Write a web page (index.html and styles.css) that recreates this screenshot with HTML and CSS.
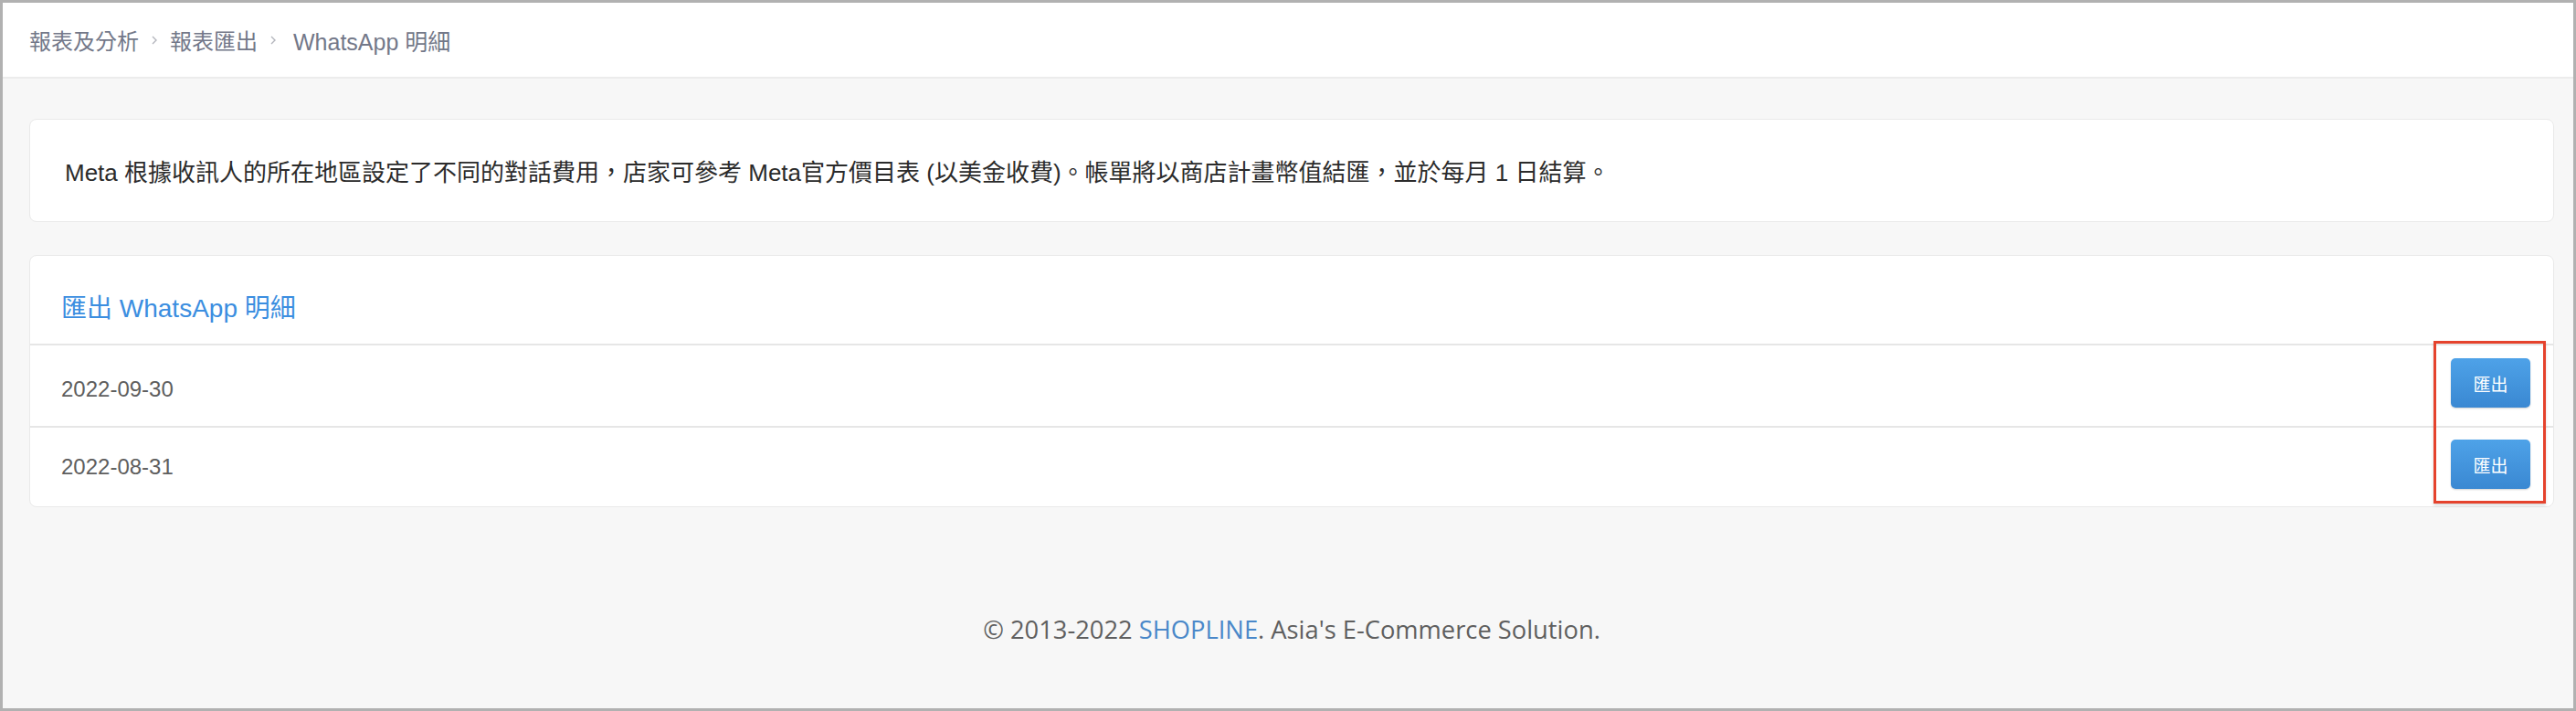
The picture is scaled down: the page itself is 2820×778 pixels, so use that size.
FILE: index.html
```html
<!DOCTYPE html>
<html lang="zh-Hant">
<head>
<meta charset="utf-8">
<title>WhatsApp 明細</title>
<link rel="stylesheet" href="styles.css">
</head>
<body>
<div class="frame">
  <header class="topbar">
    <nav class="breadcrumb">
      <span class="crumb">報表及分析</span>
      <svg class="chev" viewBox="0 0 8 12" width="8" height="12"><path d="M2 2 L6 6 L2 10" fill="none" stroke="#b4b6bd" stroke-width="1.4"/></svg>
      <span class="crumb">報表匯出</span>
      <svg class="chev" viewBox="0 0 8 12" width="8" height="12"><path d="M2 2 L6 6 L2 10" fill="none" stroke="#b4b6bd" stroke-width="1.4"/></svg>
      <span class="crumb current">WhatsApp 明細</span>
    </nav>
  </header>
  <main class="main">
    <section class="card notice">
      <p class="notice-text">Meta 根據收訊人的所在地區設定了不同的對話費用，店家可參考 Meta官方價目表 (以美金收費)。帳單將以商店計畫幣值結匯，並於每月 1 日結算。</p>
    </section>
    <section class="card export">
      <div class="export-head">匯出 WhatsApp 明細</div>
      <div class="row first">
        <span class="date">2022-09-30</span>
        <button class="btn">匯出</button>
      </div>
      <div class="row">
        <span class="date">2022-08-31</span>
        <button class="btn">匯出</button>
      </div>
      <div class="highlight"></div>
    </section>
    <footer class="footer">© 2013-2022 <span class="brand">SHOPLINE</span>. Asia's E-Commerce Solution.</footer>
  </main>
</div>
</body>
</html>
```

FILE: styles.css
```css
html, body {
  margin: 0;
  padding: 0;
}
body {
  background: #b1b1b1;
  font-family: "Liberation Sans", "Noto Sans CJK TC", sans-serif;
}
.frame {
  width: 2820px;
  height: 778px;
  box-sizing: border-box;
  border: 3px solid #b1b1b1;
  background: #f7f7f7;
  display: flex;
  flex-direction: column;
  overflow: hidden;
}
.topbar {
  height: 81px;
  flex: 0 0 81px;
  background: #ffffff;
  border-bottom: 2px solid #ececec;
  display: flex;
  align-items: center;
  padding-left: 29px;
}
.breadcrumb {
  display: flex;
  align-items: center;
  gap: 13px;
  font-size: 24px;
  color: #737889;
}
.crumb.current {
  margin-left: 5px;
  font-size: 25px;
}
.chev {
  display: block;
}
.main {
  flex: 1;
  padding: 44px 21px 0 29px;
  display: flex;
  flex-direction: column;
}
.card {
  background: #ffffff;
  border: 1px solid #e9e9e9;
  border-radius: 8px;
}
.notice {
  height: 113px;
  box-sizing: border-box;
  display: flex;
  align-items: center;
  padding: 0 38px;
}
.notice-text {
  margin: 0;
  font-size: 26px;
  color: #2b2b2b;
}
.export {
  margin-top: 36px;
  position: relative;
}
.export-head {
  height: 96px;
  box-sizing: border-box;
  padding: 14px 34px 0;
  display: flex;
  align-items: center;
  font-size: 28px;
  color: #3b8ee0;
}
.row {
  height: 88px;
  box-sizing: border-box;
  border-top: 2px solid #e6e6e6;
  display: flex;
  align-items: center;
  justify-content: space-between;
  padding: 0 25px 0 34px;
}
.row.first {
  height: 90px;
}
.row.first .date {
  margin-top: 8px;
}
.row:last-of-type {
  height: 91px;
}
.date {
  font-size: 24px;
  color: #5e5e5e;
}
.btn {
  width: 87px;
  height: 54px;
  border: none;
  border-radius: 5px;
  background: linear-gradient(#4ea2e8, #3a88d2);
  box-shadow: 0 1px 2px rgba(0, 0, 0, 0.18);
  color: #ffffff;
  font-family: "Noto Sans CJK TC", sans-serif;
  font-size: 19px;
  padding: 0;
  margin-top: -6px;
}
.highlight {
  position: absolute;
  right: 8px;
  top: 93px;
  width: 123px;
  height: 178px;
  box-sizing: border-box;
  border: 3px solid #e5432d;
  box-shadow: 0 2px 3px rgba(0, 0, 0, 0.15);
}
.footer {
  margin-top: 117px;
  text-align: center;
  font-family: "Open Sans", "Liberation Sans", sans-serif;
  font-size: 27.3px;
  line-height: 34px;
  color: #5f5f5f;
}
.brand {
  color: #4a88c9;
}
```
